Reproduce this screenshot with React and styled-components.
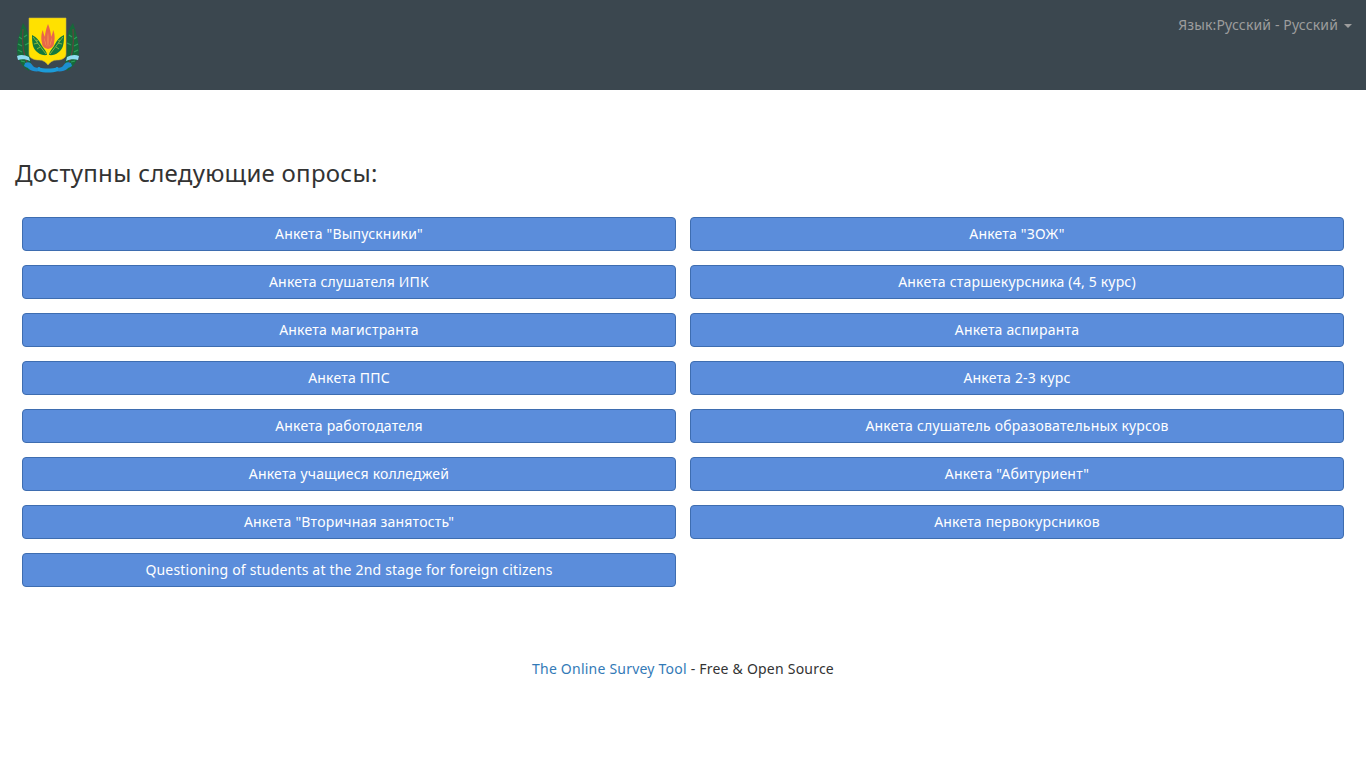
import React from "react";
import styled, { createGlobalStyle } from "styled-components";

const Global = createGlobalStyle`
  html, body { margin: 0; padding: 0; background: #fff; }
  body { font-family: "Noto Sans", sans-serif; font-size: 14px; line-height: 20px; color: #333; }
`;

const Page = styled.div`
  min-height: 768px;
  display: flex;
  flex-direction: column;
`;

const Navbar = styled.header`
  height: 90px;
  background: #3b474f;
  display: flex;
  justify-content: space-between;
  align-items: flex-start;
  padding: 15px 14px 0 16px;
  box-sizing: border-box;
`;

const LogoWrap = styled.div`
  width: 64px;
  height: 58px;
  margin-top: 2px;
`;

const LangMenu = styled.div`
  display: flex;
  align-items: center;
  color: #9d9d9d;
  font-size: 14px;
  line-height: 20px;
  letter-spacing: 0.14px;
`;

const Caret = styled.span`
  display: inline-block;
  width: 0;
  height: 0;
  margin-left: 6px;
  margin-top: 2px;
  border-top: 4px solid #9d9d9d;
  border-left: 4px solid transparent;
  border-right: 4px solid transparent;
`;

const Main = styled.main`
  padding: 66px 15px 0;
`;

const Title = styled.h2`
  margin: 0;
  font-size: 24px;
  line-height: 34px;
  font-weight: 400;
  color: #333;
  letter-spacing: 0.27px;
`;

const SurveyGrid = styled.div`
  display: grid;
  grid-template-columns: 654px 654px;
  column-gap: 14px;
  row-gap: 14px;
  margin: 27px 7px 0;
`;

const SurveyButton = styled.a`
  display: block;
  height: 34px;
  box-sizing: border-box;
  border: 1px solid #3e6db0;
  border-radius: 4px;
  background: #5b8ddb;
  color: #fff;
  text-align: center;
  font-size: 14px;
  line-height: 32px;
  letter-spacing: 0.19px;
  cursor: pointer;
`;

const Footer = styled.footer`
  margin-top: 72px;
  text-align: center;
  color: #333;
  line-height: 20px;
  letter-spacing: 0.22px;
`;

const FooterLink = styled.a`
  color: #337ab7;
  text-decoration: none;
`;

const surveys = [
  'Анкета "Выпускники"',
  'Анкета "ЗОЖ"',
  "Анкета слушателя ИПК",
  "Анкета старшекурсника (4, 5 курс)",
  "Анкета магистранта",
  "Анкета аспиранта",
  "Анкета ППС",
  "Анкета 2-3 курс",
  "Анкета работодателя",
  "Анкета слушатель образовательных курсов",
  "Анкета учащиеся колледжей",
  'Анкета "Абитуриент"',
  'Анкета "Вторичная занятость"',
  "Анкета первокурсников",
  "Questioning of students at the 2nd stage for foreign citizens",
];

const Branch = ({ flip }) => (
  <g transform={flip ? "matrix(-1 0 0 1 64 0)" : undefined}>
    <path d="M7 6 C5 12 1 24 1 33 C1 42 6 50 13 54 L15 46 C13 40 13 30 13 24 C13 16 10 10 7 6Z" fill="#17683a" />
    <path d="M7 12 C6 24 7 38 12 48" stroke="#6b4040" strokeWidth="1.1" fill="none" />
    <path d="M3 20l3 2M2 27l4 2M2 33l4 2M5 44l4 1M11 18l-3 2M13 26l-4 2" stroke="#2e9f5a" strokeWidth="1.2" />
    <path d="M1 39 C5 37 9 38 13 40 L14 44 C10 42 5 42 2 43Z" fill="#8fdcf0" />
    <path d="M9 46 C13 44 15 46 17 49 C19 51 21 51 24 50 L24 54 C20 55 15 54 13 52 C11 50 9 50 8 49Z" fill="#1c8fd0" />
  </g>
);

const Leaf = ({ flip }) => (
  <g transform={flip ? "matrix(-1 0 0 1 64 0)" : undefined}>
    <path d="M16 18 C21 20 24 25 26 29 C28 32 31 35 31 38 C25 39 19 35 17 29 C16 25 16 21 16 18Z" fill="#157a3c" />
    <path d="M17 20 L30 37 M18 27l4-1M21 32l3-2M20 23l2 1" stroke="#cfdc3a" strokeWidth=".6" fill="none" />
  </g>
);

const Crest = () => (
  <svg width="64" height="58" viewBox="0 0 64 58" aria-hidden="true">
    <Branch />
    <Branch flip />
    <path d="M13 1 H50 V37 C50 41 46 43 41 43 C37 43 34 45 32 48 C30 45 27 43 23 43 C18 43 13 41 13 37Z" fill="#ffe100" stroke="#c9b63a" strokeWidth=".6" />
    <Leaf />
    <Leaf flip />
    <path d="M32 7 C34 12 35 16 35 20 C36 18 37 15 37 13 C39 16 39 22 38 26 C38 28 37 30 35 31 L32 32 L29 31 C27 30 26 28 26 26 C25 22 25 16 27 13 C27 15 28 18 29 20 C29 16 30 12 32 7Z" fill="#e9664a" />
    <path d="M32 15 C32.6 20 32.6 26 32 31 C31.4 26 31.4 20 32 15Z M28.5 20 C29 24 30 28 31 30 C29.5 28 28 24 28.5 20Z M35.5 20 C35 24 34 28 33 30 C34.5 28 36 24 35.5 20Z" fill="#f6a94c" />
    <path d="M22 50 C28 52 36 52 42 50 L42 54 C36 56 28 56 22 54Z" fill="#1c9bd8" />
  </svg>
);

export default function App() {
  return (
    <Page>
      <Global />
      <Navbar>
        <LogoWrap>
          <Crest />
        </LogoWrap>
        <LangMenu>
          Язык:Русский - Русский
          <Caret />
        </LangMenu>
      </Navbar>
      <Main>
        <Title>Доступны следующие опросы:</Title>
        <SurveyGrid>
          {surveys.map((s) => (
            <SurveyButton key={s}>{s}</SurveyButton>
          ))}
        </SurveyGrid>
        <Footer>
          <FooterLink>The Online Survey Tool</FooterLink> - Free &amp; Open Source
        </Footer>
      </Main>
    </Page>
  );
}
